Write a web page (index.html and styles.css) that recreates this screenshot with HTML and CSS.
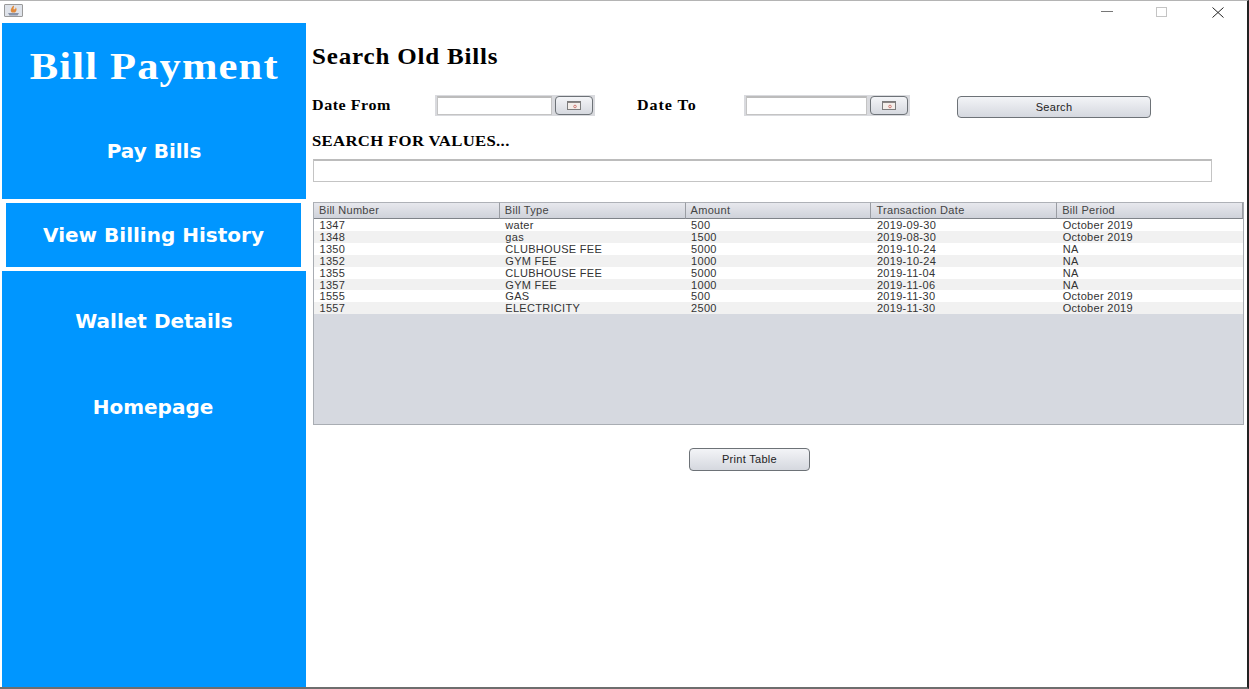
FILE: index.html
```html
<!DOCTYPE html>
<html lang="en">
<head>
<meta charset="utf-8">
<title>Bill Payment</title>
<link rel="stylesheet" href="styles.css">
</head>
<body>
<div class="window">
  <header class="titlebar">
    <span class="app-icon">
      <svg width="19" height="13" viewBox="0 0 19 13"><path d="M4 9h11l-1.500 2.500h-8z" fill="#8a94a8"/><path d="M9.500 1.500c1.500 1.500-1 2.500.5 4 1.500-.5 2-1.500 1.500-2.500 1.500 1.500 1.500 4-.5 5.500h-3c-2-1.500-1.500-4 1.500-7z" fill="#e08a3c"/></svg>
    </span>
    <div class="window-controls">
      <svg class="ctl-min" width="12" height="3" viewBox="0 0 12 3"><path d="M0 1.500h12" stroke="#777" stroke-width="1"/></svg>
      <svg class="ctl-max" width="11" height="10" viewBox="0 0 11 10"><rect x=".5" y=".5" width="10" height="9" fill="none" stroke="#c4c4c4"/></svg>
      <svg class="ctl-close" width="12" height="11" viewBox="0 0 12 11"><path d="M.5.500l11 10M11.500.500l-11 10" stroke="#222" stroke-width="1"/></svg>
    </div>
  </header>
  <div class="content">
    <aside class="sidebar">
      <h1 class="brand"><span class="brand-text">Bill Payment</span></h1>
      <a class="nav-item nav-first">Pay Bills</a>
      <a class="nav-item nav-active">View Billing History</a>
      <a class="nav-item nav-wallet">Wallet Details</a>
      <a class="nav-item nav-home">Homepage</a>
    </aside>
    <main class="main">
      <h2 class="page-title">Search Old Bills</h2>
      <div class="date-row">
        <label class="field-label label-from">Date From</label>
        <div class="date-picker picker-from">
          <input class="date-input" type="text">
          <button class="date-btn" type="button">
            <svg width="14" height="9" viewBox="0 0 14 9"><rect x=".5" y=".5" width="13" height="8" fill="#f3eeea" stroke="#7d7d7d"/><path d="M1 1h12v1H1z" fill="#8a8584"/><circle cx="8" cy="5.500" r="1.300" fill="none" stroke="#d07a74"/></svg>
          </button>
        </div>
        <label class="field-label label-to">Date To</label>
        <div class="date-picker picker-to">
          <input class="date-input" type="text">
          <button class="date-btn" type="button">
            <svg width="14" height="9" viewBox="0 0 14 9"><rect x=".5" y=".5" width="13" height="8" fill="#f3eeea" stroke="#7d7d7d"/><path d="M1 1h12v1H1z" fill="#8a8584"/><circle cx="8" cy="5.500" r="1.300" fill="none" stroke="#d07a74"/></svg>
          </button>
        </div>
        <button class="java-btn search-btn" type="button">Search</button>
      </div>
      <div class="search-label">SEARCH FOR VALUES...</div>
      <input class="search-input" type="text">
      <div class="table-pane">
        <table class="bills">
          <thead>
            <tr><th>Bill Number</th><th>Bill Type</th><th>Amount</th><th>Transaction Date</th><th>Bill Period</th></tr>
          </thead>
          <tbody>
            <tr><td>1347</td><td>water</td><td>500</td><td>2019-09-30</td><td>October 2019</td></tr>
            <tr><td>1348</td><td>gas</td><td>1500</td><td>2019-08-30</td><td>October 2019</td></tr>
            <tr><td>1350</td><td>CLUBHOUSE FEE</td><td>5000</td><td>2019-10-24</td><td>NA</td></tr>
            <tr><td>1352</td><td>GYM FEE</td><td>1000</td><td>2019-10-24</td><td>NA</td></tr>
            <tr><td>1355</td><td>CLUBHOUSE FEE</td><td>5000</td><td>2019-11-04</td><td>NA</td></tr>
            <tr><td>1357</td><td>GYM FEE</td><td>1000</td><td>2019-11-06</td><td>NA</td></tr>
            <tr><td>1555</td><td>GAS</td><td>500</td><td>2019-11-30</td><td>October 2019</td></tr>
            <tr><td>1557</td><td>ELECTRICITY</td><td>2500</td><td>2019-11-30</td><td>October 2019</td></tr>
          </tbody>
        </table>
      </div>
      <div class="print-row">
        <button class="java-btn print-btn" type="button">Print Table</button>
      </div>
    </main>
  </div>
</div>
</body>
</html>
```

FILE: styles.css
```css
* { box-sizing: border-box; }
html, body { margin: 0; height: 100%; background: #fff; overflow: hidden; }
.window {
  width: 1249px; height: 689px;
  display: flex; flex-direction: column;
  border-top: 1px solid #b4b4b4;
  border-right: 2px solid #222;
  border-bottom: 2px solid #6e6e6e;
  padding-left: 2px;
  background: #fff;
}
.titlebar { height: 22px; flex: none; display: flex; align-items: flex-start; position: relative; }
.app-icon {
  margin: 3px 0 0 2px; width: 19px; height: 13px;
  background: #dfe3ea; border: 1px solid #9a9a9a; border-radius: 1px;
  display: flex;
}
.app-icon svg { margin: -1px; }
.window-controls { margin-left: auto; display: flex; align-items: flex-start; }
.ctl-min { margin-top: 9px; }
.ctl-max { margin: 6px 0 0 43px; }
.ctl-close { margin: 6px 23px 0 45px; }
.content { flex: 1; display: flex; min-height: 0; }
.sidebar {
  width: 304px; flex: none; background: #0096ff; color: #fff;
  display: flex; flex-direction: column;
}
.brand {
  margin: 0; height: 86px; padding: 22px 0 0 1px; text-align: center;
  font: bold 37px/44px "Liberation Serif", serif; letter-spacing: 1px;
}
.brand-text { display: inline-block; transform: scaleX(1.15); }
.nav-item {
  display: flex; align-items: center; justify-content: center;
  font: bold 20px/24px "DejaVu Sans", sans-serif; color: #fff;
}
.nav-first { height: 90px; padding-bottom: 6px; }
.nav-active {
  height: 72px;
  border: 4px solid #fff; border-right-width: 5px;
}
.nav-wallet { height: 100px; }
.nav-home { height: 72px; padding-right: 2px; }
.main { flex: 1; min-width: 0; padding: 0 3px 0 6px; display: flex; flex-direction: column; }
.page-title {
  margin: 21px 0 0; height: 26px; align-self: flex-start;
  font: bold 23px/26px "Liberation Serif", serif; letter-spacing: .75px; color: #000;
  transform: scaleX(1.088); transform-origin: left center;
}
.date-row { display: flex; align-items: flex-start; margin-top: 25px; height: 23px; }
.field-label {
  font: bold 15px/21px "Liberation Serif", serif; letter-spacing: .5px; color: #000;
  transform: scaleX(1.07); transform-origin: left center;
}
.label-from { width: 123px; }
.label-to { width: 107px; margin-left: 42px; letter-spacing: .9px; }
.date-picker {
  height: 21px; background: #d9dade; padding: 1px 2px;
  display: flex; gap: 3px;
}
.picker-from { width: 160px; }
.picker-to { width: 166px; }
.date-input {
  flex: 1; min-width: 0; height: 19px; border: 1px solid #c4c4c4; border-top: 2px solid #bcbcbc; background: #fff; padding: 0;
}
.date-btn {
  width: 38px; height: 19px; padding: 0; border: 1px solid #6d7277; border-radius: 4px;
  background: linear-gradient(#f4f5f8, #d6d9df);
  display: flex; align-items: center; justify-content: center;
}
.java-btn {
  border: 1px solid #6d7277; border-radius: 4px; padding: 0;
  background: linear-gradient(#f3f4f7, #d5d8df);
  font: 11px/1 "Liberation Sans", sans-serif; letter-spacing: .3px; color: #222;
}
.search-btn { width: 194px; height: 22px; margin-left: 47px; margin-top: 1px; }
.search-label {
  margin-top: 14px; height: 19px; align-self: flex-start;
  font: bold 15px/18px "Liberation Serif", serif; letter-spacing: .3px; color: #000;
  transform: scaleX(1.113); transform-origin: left center;
}
.search-input {
  margin: 8px 0 0 1px; width: 899px; height: 23px;
  border: 1px solid #c4c4c4; border-top: 2px solid #bcbcbc; background: #fff; padding: 0; flex: none;
}
.table-pane {
  margin: 20px 0 0 1px; width: 931px; height: 223px; flex: none;
  background: #d6d9e0; border: 1px solid #a9adb3; border-top: 0;
}
.bills {
  width: 100%; table-layout: fixed; border-collapse: separate; border-spacing: 0;
  font: 11px/10.900px "Liberation Sans", sans-serif; color: #333;
}
.bills th {
  height: 17px; padding: 0 0 0 5px; text-align: left; font-weight: 400; letter-spacing: .3px; color: #444;
  background: linear-gradient(#e7e8ed, #cfd2da);
  border-top: 1px solid #aeb1b7; border-bottom: 1px solid #7f8389; border-right: 1px solid #9a9da3;
}
.bills td { height: 11.900px; padding: 1px 0 0 5.500px; white-space: nowrap; letter-spacing: .3px; background: #fff; }
.bills tbody tr:nth-child(even) td { background: #f1f1f1; }
.print-row { margin-top: 23px; padding-left: 377px; }
.print-btn { width: 121px; height: 23px; }
```
